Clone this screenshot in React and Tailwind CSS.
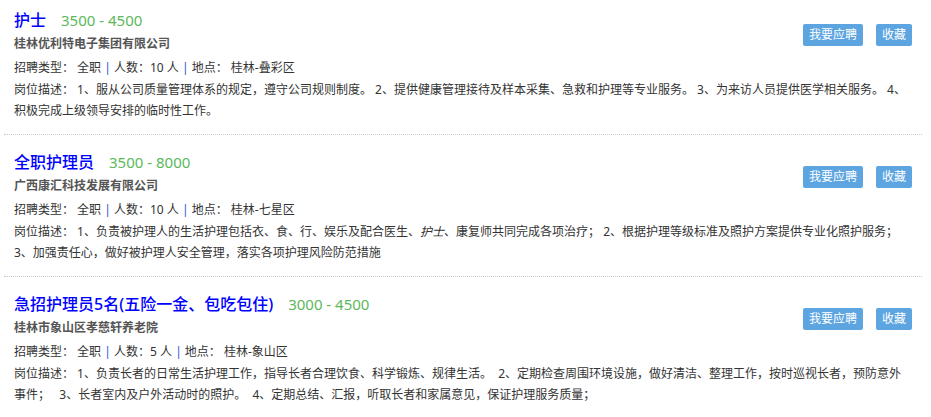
import React from 'react';

const JOBS = [
  {
    title: '护士',
    salary: '3500 - 4500',
    company: '桂林优利特电子集团有限公司',
    count: '10',
    place: '桂林-叠彩区',
    desc: [
      '岗位描述： 1、服从公司质量管理体系的规定，遵守公司规则制度。 2、提供健康管理接待及样本采集、急救和护理等专业服务。 3、为来访人员提供医学相关服务。 4、',
      '积极完成上级领导安排的临时性工作。',
    ],
  },
  {
    title: '全职护理员',
    salary: '3500 - 8000',
    company: '广西康汇科技发展有限公司',
    count: '10',
    place: '桂林-七星区',
    desc: [
      <>岗位描述： 1、负责被护理人的生活护理包括衣、食、行、娱乐及配合医生、<em>护士</em>、康复师共同完成各项治疗； 2、根据护理等级标准及照护方案提供专业化照护服务；</>,
      '3、加强责任心，做好被护理人安全管理，落实各项护理风险防范措施',
    ],
  },
  {
    title: '急招护理员5名(五险一金、包吃包住)',
    salary: '3000 - 4500',
    company: '桂林市象山区孝慈轩养老院',
    count: '5',
    place: '桂林-象山区',
    desc: [
      '岗位描述： 1、负责长者的日常生活护理工作，指导长者合理饮食、科学锻炼、规律生活。  2、定期检查周围环境设施，做好清洁、整理工作，按时巡视长者，预防意外',
      '事件；   3、长者室内及户外活动时的照护。  4、定期总结、汇报，听取长者和家属意见，保证护理服务质量；',
    ],
  },
];

function JobCard({ job }) {
  return (
    <div className="ml-[4px] mr-[9px] border-b border-dotted border-[#c8c8c8] pl-[10px] pr-[2px] pt-[14px] pb-[13px] first:pt-[7px]">
      <div className="flex items-start">
        <div className="flex-1">
          <div className="flex items-center h-[26px]">
            <span className="text-[16px] font-medium text-[#0000ff]">{job.title}</span>
            <span className="ml-[15px] text-[15px] text-[#5cb85c]">{job.salary}</span>
          </div>
          <div className="h-[22px] leading-[22px] text-[12px] font-bold text-[#555]">{job.company}</div>
          <div className="mt-[2px] h-[22px] leading-[22px] text-[12px] text-[#333] whitespace-pre">
            招聘类型： 全职 <span className="text-[#2a55d4]">|</span> 人数：{job.count} 人 <span className="text-[#2a55d4]">|</span> 地点： {job.place}
          </div>
        </div>
        <div className="mt-[17px] mr-[8px] flex gap-[13px]">
          <button className="w-[60px] h-[22px] rounded-[2px] bg-[#5da5e1] text-white text-[12px] leading-[22px]">我要应聘</button>
          <button className="w-[36px] h-[22px] rounded-[2px] bg-[#5da5e1] text-white text-[12px] leading-[22px]">收藏</button>
        </div>
      </div>
      <div className="text-[12px] leading-[21px] text-[#333] whitespace-pre-wrap">
        {job.desc[0]}
        <br />
        {job.desc[1]}
      </div>
    </div>
  );
}

export default function App() {
  return (
    <div className="w-[931px] h-[417px] overflow-hidden bg-white" style={{ fontFamily: '"Noto Sans", "Noto Sans CJK SC", sans-serif' }}>
      {JOBS.map(job => <JobCard key={job.title} job={job} />)}
    </div>
  );
}
